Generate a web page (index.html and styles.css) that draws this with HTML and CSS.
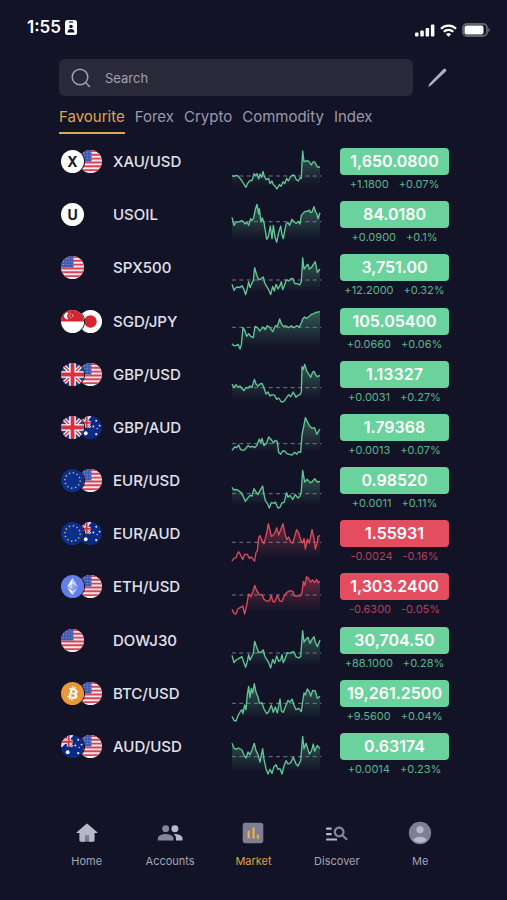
FILE: index.html
```
<!DOCTYPE html>
<html lang="en">
<head>
<meta charset="UTF-8">
<meta name="viewport" content="width=device-width, initial-scale=1.0">
<title>Market</title>
<link rel="stylesheet" href="styles.css">
</head>
<body>

<!-- flags and coins -->
<svg class="sprite" aria-hidden="true">
    <defs>
        <linearGradient id="fade-up" x1="0" y1="0" x2="0" y2="126" gradientUnits="userSpaceOnUse">
            <stop offset="0" stop-color="#6ad29c" stop-opacity="0.4"/>
            <stop offset="0.9" stop-color="#6ad29c" stop-opacity="0"/>
        </linearGradient>
        <linearGradient id="fade-down" x1="0" y1="0" x2="0" y2="126" gradientUnits="userSpaceOnUse">
            <stop offset="0" stop-color="#e44c60" stop-opacity="0.45"/>
            <stop offset="0.9" stop-color="#e44c60" stop-opacity="0"/>
        </linearGradient>
    </defs>
    <symbol id="us" viewBox="0 0 24 24">
        <rect width="24" height="24" fill="#f3e9ee"/>
        <path d="M0 1h24M0 5h24M0 9h24M0 13h24M0 17h24M0 21h24" stroke="#dc4456" stroke-width="2"/>
        <rect width="13" height="12" fill="#4058b0"/>
        <path d="M2 3h11M2 6h11M2 9h11" stroke="#a5b3e4" stroke-width="1" stroke-dasharray="1 2"/>
    </symbol>
    <symbol id="sg" viewBox="0 0 24 24">
        <rect width="24" height="24" fill="#fff"/>
        <rect width="24" height="12" fill="#d3242f"/>
        <path d="M8 3a3.5 3.5 0 1 0 0 6.5a4 4 0 0 1 0-6.5" fill="#fff"/>
        <circle cx="10.5" cy="6" r="2" fill="none" stroke="#fff" stroke-width="1" stroke-dasharray="1 1.5"/>
    </symbol>
    <symbol id="jp" viewBox="0 0 24 24">
        <rect width="24" height="24" fill="#fff"/>
        <circle cx="12" cy="12" r="6.5" fill="#d3242f"/>
    </symbol>
    <symbol id="gb" viewBox="0 0 24 24">
        <rect width="24" height="24" fill="#1f4798"/>
        <path d="M0 0l24 24M24 0L0 24" stroke="#fff" stroke-width="4"/>
        <path d="M0 0l24 24M24 0L0 24" stroke="#d8323f" stroke-width="1.5"/>
        <path d="M12 0v24M0 12h24" stroke="#fff" stroke-width="7"/>
        <path d="M12 0v24M0 12h24" stroke="#d8323f" stroke-width="4"/>
    </symbol>
    <symbol id="au" viewBox="0 0 24 24">
        <rect width="24" height="24" fill="#0b2a82"/>
        <path d="M0 0l12 12M12 0L0 12" stroke="#e8e4ee" stroke-width="2.5"/>
        <path d="M0 0l12 12" stroke="#d8323f" stroke-width="1"/>
        <path d="M8 0v12M0 7h12" stroke="#e8e4ee" stroke-width="4"/>
        <path d="M8 0v12M0 7h12" stroke="#d8323f" stroke-width="2"/>
        <circle cx="7" cy="18" r="2" fill="#fff"/>
        <g fill="#dfe6ff">
            <circle cx="18" cy="5" r="1"/>
            <circle cx="15" cy="11" r="1"/>
            <circle cx="21.5" cy="10" r="1"/>
            <circle cx="19" cy="13" r=".7"/>
            <circle cx="18" cy="19" r="1.2"/>
        </g>
    </symbol>
    <symbol id="eu" viewBox="0 0 24 24">
        <rect width="24" height="24" fill="#0a2f8c"/>
        <circle cx="12" cy="12" r="8" fill="none" stroke="#c5b95a" stroke-width="1.5" stroke-dasharray="1.5 2.689"/>
    </symbol>
    <symbol id="eth" viewBox="0 0 24 24">
        <rect width="24" height="24" fill="#627eea"/>
        <path d="M12 3v6.6l5.5 2.5z" fill="#c4cff7"/>
        <path d="M12 3L6.5 12.1 12 9.6z" fill="#fff"/>
        <path d="M12 16.4V21l5.5-7.7z" fill="#c4cff7"/>
        <path d="M12 21v-4.6l-5.5-3.1z" fill="#fff"/>
        <path d="M12 15.4l5.5-3.3L12 9.6z" fill="#93a6f0"/>
        <path d="M6.5 12.1l5.5 3.3V9.6z" fill="#c4cff7"/>
    </symbol>
    <symbol id="btc" viewBox="0 0 32 32">
        <rect width="32" height="32" fill="#ea973a"/>
        <path fill="#fff" d="M23.189 14.02c.314-2.096-1.283-3.223-3.465-3.975l.708-2.84-1.728-.43-.69 2.765c-.454-.114-.92-.22-1.385-.326l.695-2.783L15.596 6l-.708 2.839c-.376-.086-.746-.17-1.104-.26l.002-.009-2.384-.595-.46 1.846s1.283.294 1.256.312c.7.175.826.638.805 1.006l-.806 3.235c.048.012.11.03.18.057l-.183-.045-1.13 4.532c-.086.212-.303.531-.793.41.018.025-1.256-.313-1.256-.313l-.858 1.978 2.25.561c.418.105.828.215 1.231.318l-.715 2.872 1.727.43.708-2.84c.472.127.93.245 1.378.357l-.706 2.828 1.728.43.715-2.866c2.948.558 5.164.333 6.097-2.333.752-2.146-.037-3.385-1.588-4.192 1.13-.26 1.98-1.003 2.207-2.538zm-3.95 5.538c-.533 2.147-4.148.986-5.32.695l.95-3.805c1.172.293 4.929.872 4.37 3.11zm.535-5.569c-.487 1.953-3.495.96-4.47.717l.86-3.45c.975.243 4.118.696 3.61 2.733z"/>
    </symbol>
</svg>

<header class="status">
    <div class="status-left">
        <span>1:55</span>
        <svg width="12" height="15" viewBox="0 0 12 15">
            <rect width="12" height="15" rx="2.5" fill="#fff"/>
            <path d="M4 2h4" stroke="#121327" stroke-width="1.2"/>
            <circle cx="6" cy="6.5" r="1.8" fill="#121327"/>
            <path d="M2.5 12.5c0-2.5 1.5-3.5 3.5-3.5s3.5 1 3.5 3.5z" fill="#121327"/>
        </svg>
    </div>
    <div class="status-right">
        <svg width="20" height="13" viewBox="0 0 20 13" fill="#fff">
            <rect x="0" y="8.5" width="3.5" height="4" rx="1"/>
            <rect x="5.3" y="6.5" width="3.5" height="6" rx="1"/>
            <rect x="10.6" y="4" width="3.5" height="8.5" rx="1"/>
            <rect x="15.9" y="0.5" width="3.5" height="12" rx="1"/>
        </svg>
        <svg width="17" height="13" viewBox="0 0 17 13" fill="none" stroke="#fff" stroke-width="2.3">
            <path d="M1 4.8a10.6 10.6 0 0 1 15 0"/>
            <path d="M3.8 7.8a6.6 6.6 0 0 1 9.4 0"/>
            <path d="M8.5 12.8L6 10.2a3.6 3.6 0 0 1 5 0z" fill="#fff" stroke="none"/>
        </svg>
        <svg width="28" height="14" viewBox="0 0 28 14">
            <rect x="1" y="1" width="24" height="12" rx="4" fill="none" stroke="#62626e" stroke-width="2"/>
            <rect x="2.5" y="2.5" width="19" height="9" rx="2" fill="#fff"/>
            <path d="M26.3 4.8a2.4 2.4 0 0 1 0 4.4z" fill="#74747f"/>
        </svg>
    </div>
</header>

<main>
    <div class="search-row">
        <label class="search">
            <svg width="20" height="20" viewBox="0 0 20 20" fill="none" stroke="#a2a1b0" stroke-width="1.5" stroke-linecap="round">
                <circle cx="9" cy="9" r="7.8"/>
                <path d="M14.5 14.5l4 4"/>
            </svg>
            <input type="text" placeholder="Search" aria-label="Search">
        </label>
        <button class="edit" aria-label="Edit favourites">
            <svg width="20" height="20" viewBox="0 0 20 20" fill="#b0afbe">
                <path d="M16.3 1.2a1.7 1.7 0 0 1 2.5 2.4L4.2 17.2 1 19l1.6-3.4z"/>
            </svg>
        </button>
    </div>

    <nav class="tabs">
        <a href="#" class="active">Favourite</a>
        <a href="#">Forex</a>
        <a href="#">Crypto</a>
        <a href="#">Commodity</a>
        <a href="#">Index</a>
    </nav>

    <ul class="list" id="list"></ul>
</main>

<nav class="bottom">
    <a href="#">
        <svg viewBox="0 0 24 24"><path d="M7 12h10v8H7z" fill="#7f7f93"/><path d="M10 20v-6h4v6h4q1 0 1-1v-7h2.200q1 0 .3-.8L12.700 3.600q-.7-.6-1.400 0L2.500 11.200q-.7.8.3.8H5v7q0 1 1 1z"/></svg>
        Home
    </a>
    <a href="#">
        <svg viewBox="0 0 24 24">
            <g fill="#85859a"><circle cx="8" cy="8" r="3.2"/><path d="M8 13C5.7 13 .8 14.2.8 16.5V19h14.4v-2.5C15.2 14.2 10.3 13 8 13z"/></g>
            <circle cx="16.5" cy="8" r="3.2"/>
            <path d="M16.5 13c-.3 0-.6 0-1 .1 1.2.8 2 2 2 3.400V19h6v-2.500c0-2.300-4.700-3.500-7-3.500z"/>
        </svg>
        Accounts
    </a>
    <a href="#" class="active">
        <svg viewBox="0 0 24 24"><rect x="2.5" y="2.5" width="19" height="19" rx="2.5" fill="#7f7f93"/><path d="M8 10v7M12.5 7v10M16.5 13.5V17" stroke="#efb046" stroke-width="2"/></svg>
        Market
    </a>
    <a href="#">
        <svg viewBox="0 0 24 24"><path d="M7 9H2V7h5v2zm0 3H2v2h5v-2zM2 19h10v-2H2v2z"/><path fill="#85859a" d="M20.59 19l-3.83-3.83c-.8.52-1.74.83-2.76.83-2.76 0-5-2.24-5-5s2.24-5 5-5 5 2.24 5 5c0 1.02-.31 1.96-.83 2.75L22 17.59 20.59 19zM17 11c0-1.65-1.35-3-3-3s-3 1.35-3 3 1.35 3 3 3 3-1.35 3-3z"/></svg>
        Discover
    </a>
    <a href="#">
        <svg viewBox="0 0 24 24"><circle cx="12" cy="12" r="10.3" fill="#7f7f93"/><circle cx="12" cy="9" r="3.3"/><path d="M5.5 18.5Q8 15.5 12 15.5t6.5 3Q16 21 12 21t-6.5-2.5z"/></svg>
        Me
    </a>
</nav>

<script src="script.js"></script>
</body>
</html>
```

FILE: styles.css
```
* {
    box-sizing: border-box;
}
body {
    margin: 0;
    min-height: 100vh;
    display: flex;
    flex-direction: column;
    background-color: #121327;
    color: #e3e2ec;
    font-family: Inter, "Liberation Sans", sans-serif;
}
a {
    color: inherit;
    text-decoration: none;
}
svg {
    display: block;
}
.sprite {
    position: absolute;
    width: 0;
    height: 0;
}

/* status bar */
.status {
    display: flex;
    justify-content: space-between;
    height: 59px;
    padding: 16px 17px 0 27px;
    color: #fff;
}
.status-left,
.status-right {
    display: flex;
    align-items: center;
}
.status-left {
    gap: 4px;
    height: 22px;
    font-size: 17px;
    font-weight: 600;
}
.status-right {
    gap: 5px;
    height: 28px;
}

main {
    flex: 1;
    display: flex;
    flex-direction: column;
    padding: 0 58px 0 59px;
}

/* search */
.search-row {
    display: flex;
    align-items: center;
    gap: 12px;
}
.search {
    flex: 1;
    display: flex;
    align-items: center;
    gap: 14px;
    height: 37px;
    padding: 0 12px;
    border-radius: 6px;
    background-color: #2a293a;
}
.search input {
    flex: 1;
    min-width: 0;
    padding: 0;
    border: none;
    outline: none;
    background: none;
    color: #e3e2ec;
    font-family: inherit;
    font-size: 13px;
}
.search input::placeholder {
    color: #a2a1b0;
}
.edit {
    padding: 2px;
    border: none;
    background: none;
    cursor: pointer;
}

/* tabs */
.tabs {
    display: flex;
    gap: 10px;
    margin: 10px 0 14px;
    color: #9a99ac;
    font-size: 15px;
    line-height: 22px;
}
.tabs a {
    padding-bottom: 4px;
    border-bottom: 2px solid transparent;
}
.tabs .active {
    color: #e0a647;
    border-color: #e0a647;
}

/* instruments */
.list {
    flex: 1;
    display: grid;
    grid-auto-rows: 1fr;
    margin: 0;
    padding: 0;
    list-style: none;
}
.list li {
    display: grid;
    grid-template-columns: 54px 1fr 90px 109px;
    align-items: start;
}
.icons {
    display: flex;
    padding: 2px;
}
.icon {
    width: 23px;
    height: 23px;
    border-radius: 50%;
}
.icon:first-child {
    z-index: 1;
    box-shadow: 0 0 0 1px #121327;
}
.icon + .icon {
    margin-left: -5px;
}
.letter {
    background-color: #fff;
    color: #17182b;
    font-size: 14px;
    font-weight: 700;
    line-height: 23px;
    text-align: center;
}
.name {
    font-size: 15px;
    font-weight: 500;
    line-height: 27px;
}
.chart {
    width: 90px;
    height: 42px;
    margin: 1px 0 0 -18px;
    overflow: visible;
}
.chart .line {
    fill: none;
    stroke: #62c795;
    stroke-width: 4;
    stroke-linejoin: round;
}
.chart .dash {
    stroke: #77778a;
    stroke-width: 3;
    stroke-dasharray: 12 10;
}
.quote {
    text-align: center;
}
.price {
    border-radius: 4px;
    background-color: #6ad29c;
    color: #fff;
    font-size: 16px;
    font-weight: 600;
    line-height: 27px;
}
.change {
    display: flex;
    justify-content: center;
    gap: 10px;
    color: #5cb58d;
    font-size: 11px;
    line-height: 18px;
}
.down .price {
    background-color: #e44c60;
}
.down .change {
    color: #b53f59;
}
.down .line {
    stroke: #dc4a5e;
}

/* bottom navigation */
.bottom {
    display: grid;
    grid-template-columns: repeat(5, 1fr);
    padding: 34px 45px 31px;
    color: #a5a4b6;
    font-size: 11px;
    line-height: 16px;
}
.bottom a {
    display: flex;
    flex-direction: column;
    align-items: center;
    gap: 7px;
}
.bottom svg {
    width: 26px;
    height: 26px;
    fill: #b9b8cb;
}
.bottom .active {
    color: #e0a13c;
}
```

FILE: script.js
```
// icons, name, price, change, percent, dashed level, chart points
const rows = [
    ['X us', 'XAU/USD', '1,650.0800', '+1.1800', '+0.07%', 81, '0,80 6,82 12,79 18,81 24,88 30,96 36,106 42,115 47,103 54,94 60,95 66,74 71,80 75,74 80,90 84,75 89,85 93,67 97,82 103,92 110,88 114,104 120,96 124,107 128,110 135,120 142,107 147,112 153,98 158,104 164,88 169,96 175,84 182,78 188,80 193,92 199,96 205,86 208,88 210,40 212,6 216,38 222,36 230,36 238,48 242,40 247,38 252,46 256,54 264,54'],
    ['U', 'USOIL', '84.0180', '+0.0900', '+0.1%', 59, '0,46 6,70 12,60 20,60 28,56 34,58 39,66 44,60 50,70 56,50 60,56 65,48 70,22 75,7 80,36 82,20 87,60 91,48 96,62 101,92 104,112 109,104 115,72 120,110 124,70 129,105 134,121 140,92 146,72 150,98 154,110 159,82 163,64 168,62 173,70 180,52 187,60 193,64 198,58 204,66 208,40 213,34 220,28 226,28 232,24 236,32 240,30 246,14 251,30 255,36 258,50 264,32'],
    ['us', 'SPX500', '3,751.00', '+12.2000', '+0.32%', 75, '0,88 6,106 12,98 18,96 24,98 30,92 36,104 41,119 46,100 50,80 54,98 59,86 64,76 68,38 74,60 80,74 86,72 94,66 98,84 104,94 110,104 116,119 122,94 127,108 132,88 138,102 144,92 148,80 152,104 157,92 163,74 170,78 176,72 183,70 188,86 196,86 203,90 208,80 212,8 216,42 222,34 228,28 232,42 238,38 244,28 250,20 256,52 264,42'],
    ['sg jp', 'SGD/JPY', '105.05400', '+0.0660', '+0.06%', 55, '0,104 6,110 12,110 18,106 24,120 28,108 33,56 38,64 44,82 50,74 56,82 64,86 69,52 76,56 84,66 92,54 100,62 106,50 114,56 122,68 130,50 136,52 143,30 148,44 154,52 162,50 170,56 178,50 186,56 194,50 202,54 208,42 212,30 218,24 224,28 232,22 238,16 246,14 252,10 264,8'],
    ['gb us', 'GBP/USD', '1.13327', '+0.0031', '+0.27%', 77, '0,66 6,76 12,68 18,76 24,72 30,80 36,86 42,76 48,78 54,72 60,76 67,52 72,66 78,72 84,66 90,64 96,78 102,96 108,90 114,102 120,98 128,100 134,112 140,108 148,120 156,118 164,106 170,98 176,104 184,90 192,106 198,100 204,98 208,90 210,14 214,22 218,7 224,26 230,36 236,46 242,30 246,28 252,40 256,44 264,40'],
    ['gb au', 'GBP/AUD', '1.79368', '+0.0013', '+0.07%', 86, '0,106 8,96 14,98 20,90 26,104 34,106 40,102 48,92 54,96 62,94 68,98 74,92 82,72 86,84 90,70 96,92 104,84 110,66 118,74 124,84 130,76 136,80 140,112 146,118 152,108 158,108 164,116 172,118 180,120 188,112 194,118 200,110 206,112 210,60 216,30 220,8 226,20 232,32 240,40 248,38 254,58 264,42'],
    ['eu us', 'EUR/USD', '0.98520', '+0.0011', '+0.11%', 77, '0,58 6,66 12,64 20,68 28,74 34,86 40,100 46,92 54,82 60,84 66,62 72,72 78,80 84,68 92,54 96,80 100,98 106,106 112,120 118,104 126,106 130,102 138,120 144,118 150,104 156,104 164,74 168,88 174,82 182,94 190,80 198,90 204,84 208,70 212,7 218,42 226,34 234,44 240,42 248,32 256,42 264,40'],
    ['eu au', 'EUR/AUD', '1.55931', '-0.0024', '-0.16%', 64, '0,120 6,112 12,110 19,92 25,100 32,116 38,100 46,100 52,112 58,108 64,116 68,120 72,94 76,90 80,50 84,44 90,58 96,68 104,36 109,8 114,28 118,46 124,42 130,32 134,20 140,42 146,26 153,8 158,34 164,56 170,48 176,64 182,66 188,46 194,26 200,36 206,56 212,66 216,52 220,84 226,54 232,66 240,26 246,52 250,84 256,64 258,46 264,44'],
    ['eth us', 'ETH/USD', '1,303.2400', '-0.6300', '-0.05%', 63, '0,106 6,118 12,120 18,104 26,100 32,96 38,120 44,94 50,60 56,68 62,56 68,34 74,50 82,62 90,62 96,76 104,82 112,80 118,64 122,82 128,84 136,64 144,82 150,82 158,62 166,54 174,50 182,52 188,66 196,66 204,66 210,56 214,22 218,34 224,8 230,14 236,24 242,18 248,26 254,16 258,26 264,22'],
    ['us', 'DOWJ30', '30,704.50', '+88.1000', '+0.28%', 75, '0,82 6,104 12,96 20,92 30,86 36,104 41,118 46,100 50,80 54,96 60,84 64,76 68,40 74,58 80,74 88,72 94,66 98,84 104,94 110,104 116,120 122,94 128,106 134,84 140,100 146,96 150,80 154,104 160,90 166,74 174,76 180,72 186,72 192,86 200,90 206,86 212,8 216,42 222,34 228,28 234,46 240,34 246,26 250,42 256,56 264,36'],
    ['btc us', 'BTC/USD', '19,261.2500', '+9.5600', '+0.04%', 67, '0,106 6,118 12,120 18,104 26,90 30,86 33,98 38,72 42,86 46,40 50,16 54,50 58,22 62,36 67,8 72,34 78,48 82,66 90,66 96,84 104,98 110,92 118,72 124,94 130,78 136,96 144,54 148,90 154,94 160,78 168,58 174,64 180,54 186,72 192,86 200,82 208,92 212,60 216,36 220,42 226,24 232,32 236,46 242,28 250,30 256,52 264,46'],
    ['au us', 'AUD/USD', '0.63174', '+0.0014', '+0.23%', 68, '0,28 6,42 12,46 20,42 30,48 36,64 42,72 48,54 54,62 60,48 67,28 72,50 78,62 84,84 92,44 96,76 102,104 108,120 114,106 120,118 126,98 132,92 138,106 144,104 150,120 156,96 162,80 168,90 176,86 184,70 192,90 198,96 206,80 212,7 216,44 222,28 226,40 232,60 238,52 244,30 248,52 256,34 264,44']
];

// instruments without a flag get their first letter
function icon(id) {
    if (id.length === 1) {
        return `<span class="icon letter">${id}</span>`;
    }
    return `<svg class="icon"><use href="#${id}"/></svg>`;
}

document.getElementById('list').innerHTML = rows.map(([icons, name, price, change, percent, level, points]) => {
    const dir = change[0] === '-' ? 'down' : 'up';
    return `
    <li class="${dir}">
        <div class="icons">${icons.split(' ').map(icon).join('')}</div>
        <div class="name">${name}</div>
        <svg class="chart" viewBox="0 0 270 126">
            <polygon points="0,126 ${points} 264,126" fill="url(#fade-${dir})"/>
            <path class="dash" d="M0 ${level}H268"/>
            <polyline class="line" points="${points}"/>
        </svg>
        <div class="quote">
            <div class="price">${price}</div>
            <div class="change"><span>${change}</span><span>${percent}</span></div>
        </div>
    </li>`;
}).join('');
```
